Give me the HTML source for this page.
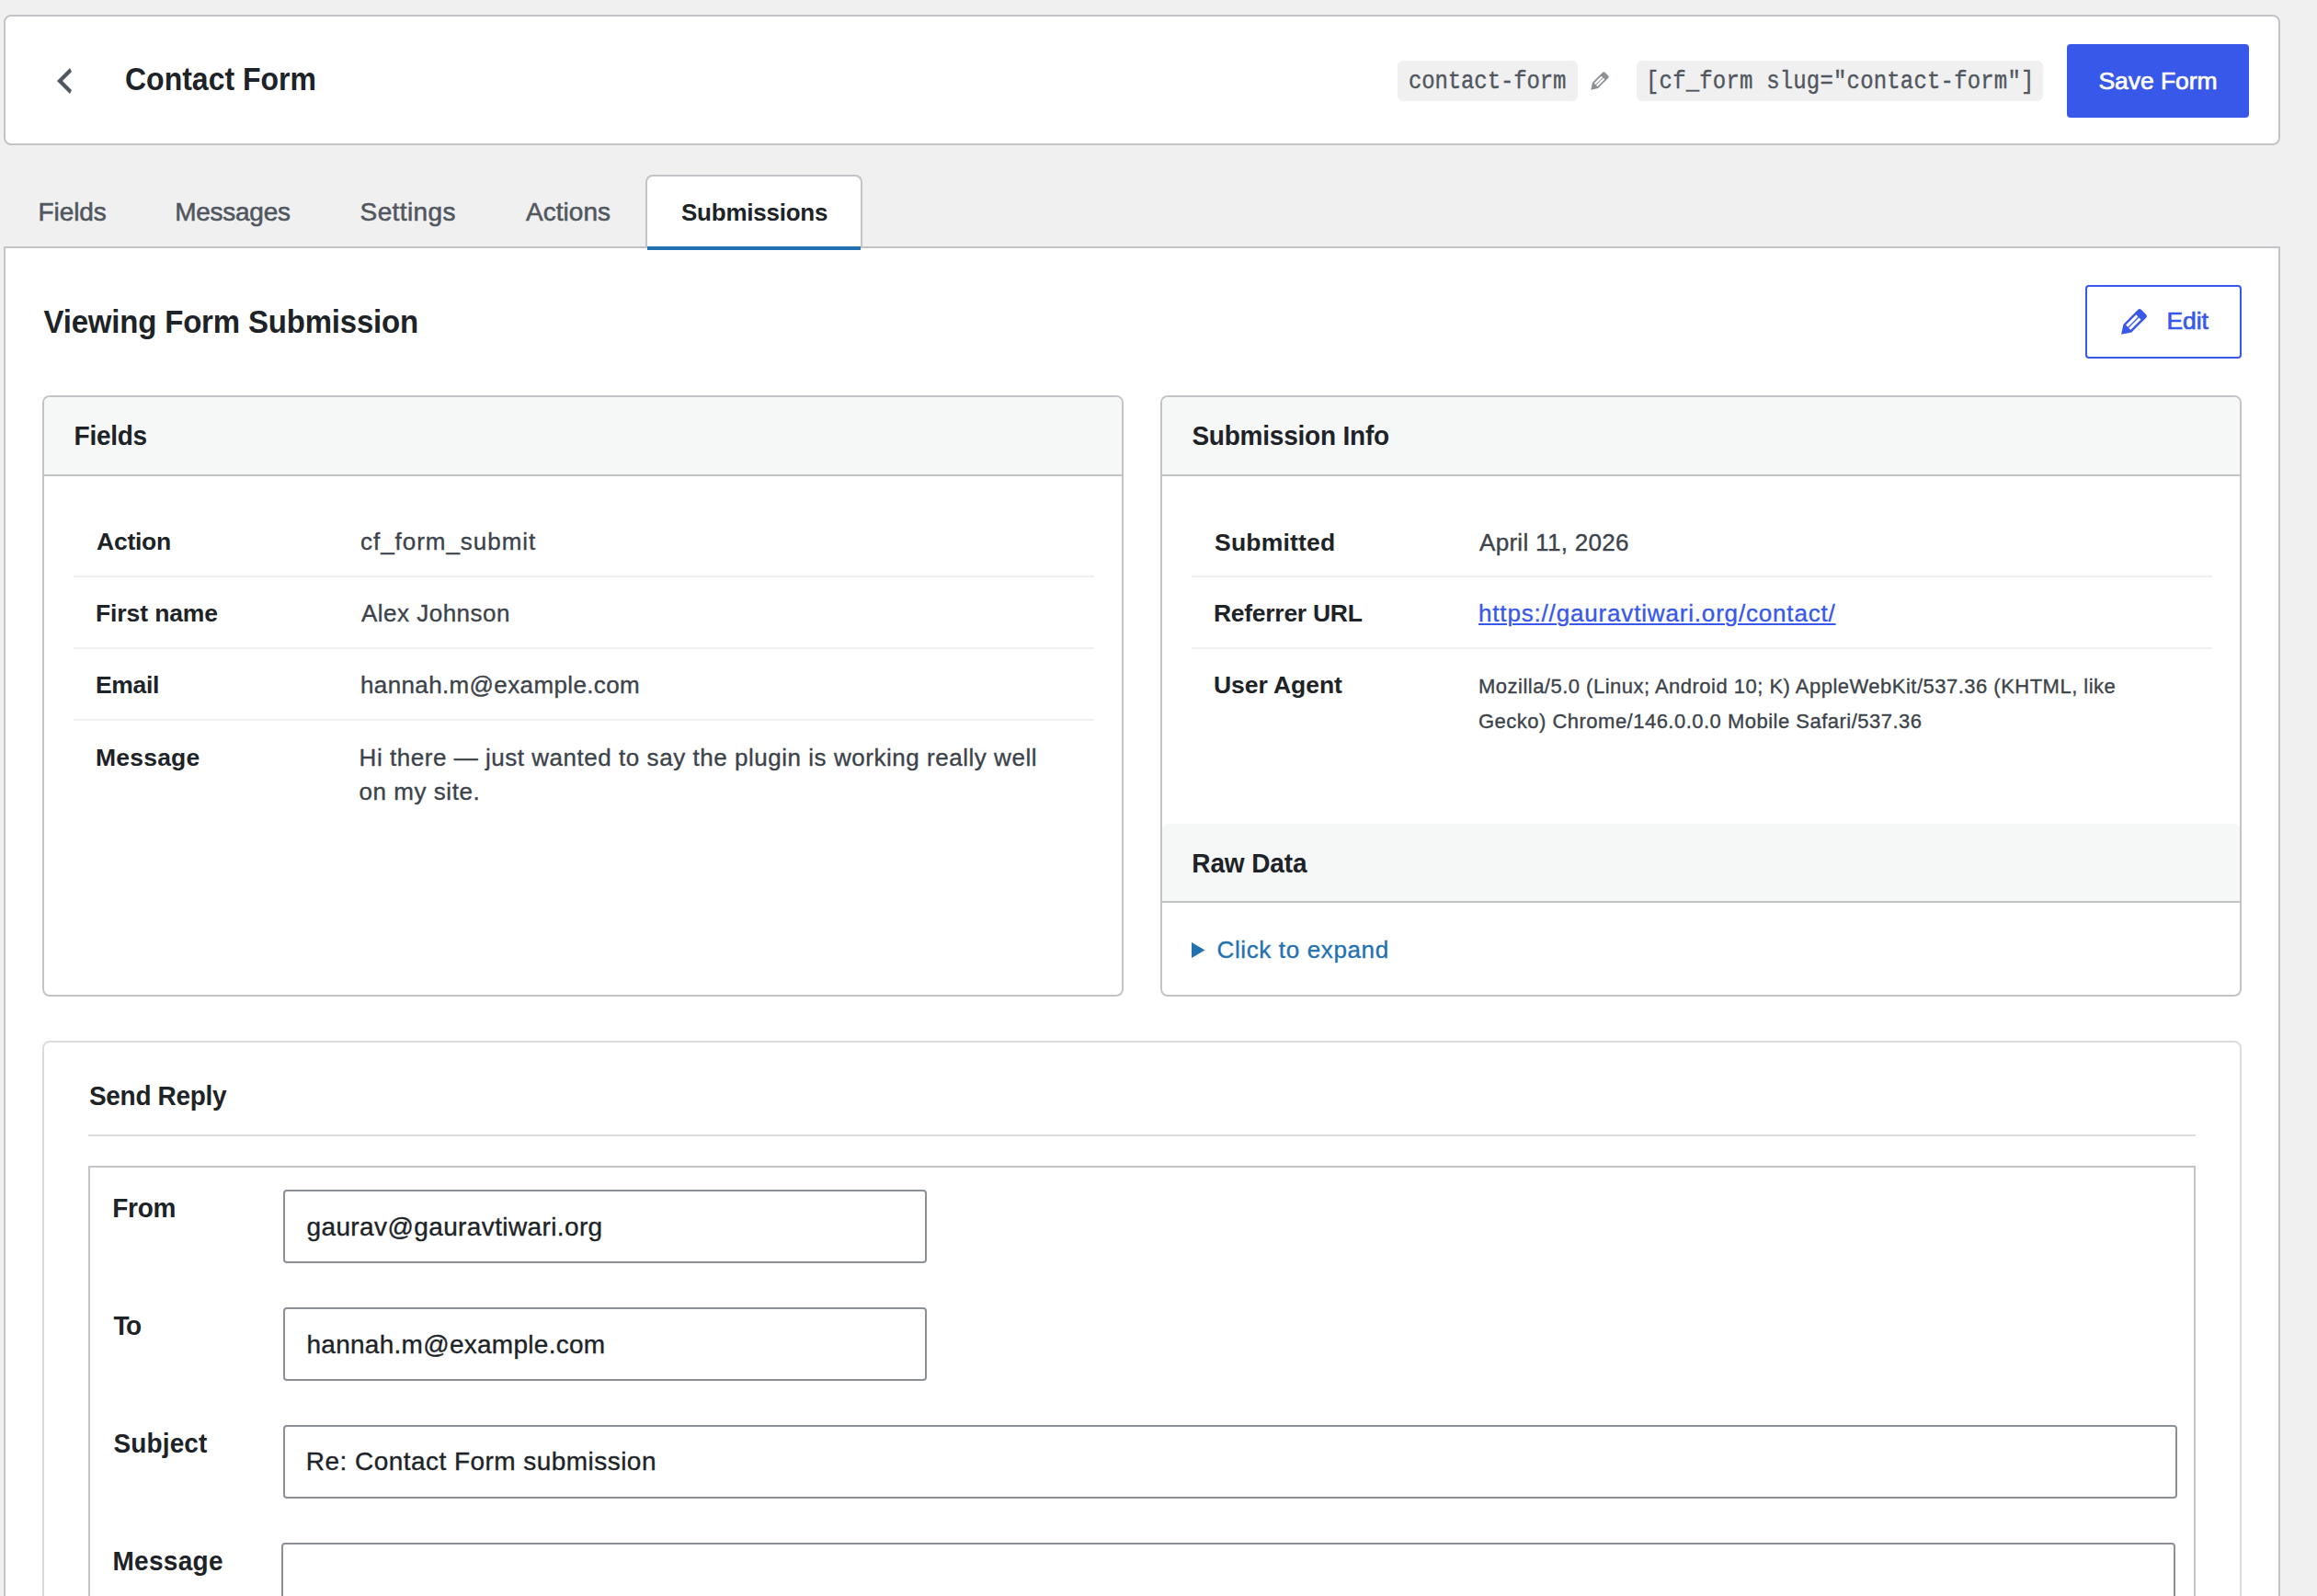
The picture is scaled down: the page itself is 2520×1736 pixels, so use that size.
<!DOCTYPE html>
<html><head><meta charset="utf-8">
<style>
html,body{margin:0;padding:0;}
body{width:2520px;height:1736px;overflow:hidden;background:#f0f0f1;position:relative;font-family:"Liberation Sans",sans-serif;}
.b{position:absolute;box-sizing:border-box;}
.t{position:absolute;white-space:nowrap;font-family:"Liberation Sans",sans-serif;}
svg{position:absolute;overflow:visible;}
</style></head><body>
<!-- header card -->
<div class="b" style="left:4px;top:16px;width:2476px;height:142px;background:#fff;border:2px solid #c3c4c7;border-radius:8px;"></div>
<svg style="left:50px;top:68px" width="40" height="40" viewBox="0 0 20 20"><path fill="#50575e" d="M14 5l-5 5 5 5-1 2-7-7 7-7z"/></svg>
<div class="b" style="left:1520px;top:66px;width:196px;height:44px;background:#f0f0f1;border-radius:6px;"></div>
<div class="b" style="left:1780px;top:66px;width:442px;height:44px;background:#f0f0f1;border-radius:6px;"></div>
<svg style="left:1725.7px;top:73.7px" width="28" height="28" viewBox="0 0 20 20"><path fill="#8c8f94" d="M13.89 3.39l2.71 2.72c.46.46.42 1.24.03 1.64l-8.01 8.02-5.560 1.16 1.16-5.58s7.6-7.63 7.99-8.03c.39-.39 1.22-.39 1.68.07zm-2.73 2.79l-5.59 5.61 1.11 1.110 5.54-5.65zm-2.97 8.23l5.58-5.6-1.07-1.08-5.59 5.6z"/></svg>
<div class="b" style="left:2248px;top:48px;width:198px;height:80px;background:#3858e9;border-radius:4px;"></div>
<!-- tabs + panel -->
<div class="b" style="left:4px;top:268px;width:2476px;height:1500px;background:#fff;border:2px solid #c3c4c7;"></div>
<div class="b" style="left:702px;top:190px;width:236px;height:80px;background:#fff;border:2px solid #c3c4c7;border-bottom:none;border-radius:8px 8px 0 0;"></div>
<div class="b" style="left:704px;top:268px;width:232px;height:4px;background:#2271b1;"></div>
<!-- edit button -->
<div class="b" style="left:2268px;top:310px;width:170px;height:80px;border:2px solid #3858e9;border-radius:4px;"></div>
<svg style="left:2300.8px;top:330px" width="40" height="40" viewBox="0 0 20 20"><path fill="#3858e9" d="M13.89 3.39l2.71 2.72c.46.46.42 1.24.03 1.64l-8.01 8.02-5.560 1.16 1.16-5.58s7.6-7.63 7.99-8.03c.39-.39 1.22-.39 1.68.07zm-2.73 2.79l-5.59 5.61 1.11 1.110 5.54-5.65zm-2.97 8.23l5.58-5.6-1.07-1.08-5.59 5.6z"/></svg>
<!-- fields card -->
<div class="b" style="left:46px;top:430px;width:1176px;height:654px;background:#fff;border:2px solid #c3c4c7;border-radius:8px;overflow:hidden;">
  <div class="b" style="left:0;top:0;width:1172px;height:86px;background:#f6f7f7;border-bottom:2px solid #c3c4c7;"></div>
</div>
<div class="b" style="left:80px;top:626px;width:1110px;height:2px;background:#f0f0f1;"></div>
<div class="b" style="left:80px;top:704px;width:1110px;height:2px;background:#f0f0f1;"></div>
<div class="b" style="left:80px;top:782px;width:1110px;height:2px;background:#f0f0f1;"></div>
<!-- submission info card -->
<div class="b" style="left:1262px;top:430px;width:1176px;height:654px;background:#fff;border:2px solid #c3c4c7;border-radius:8px;overflow:hidden;">
  <div class="b" style="left:0;top:0;width:1172px;height:86px;background:#f6f7f7;border-bottom:2px solid #c3c4c7;"></div>
  <div class="b" style="left:0;top:464px;width:1172px;height:86px;background:#f6f7f7;border-bottom:2px solid #c3c4c7;border-radius:6px 6px 0 0;"></div>
</div>
<div class="b" style="left:1296px;top:626px;width:1110px;height:2px;background:#f0f0f1;"></div>
<div class="b" style="left:1296px;top:704px;width:1110px;height:2px;background:#f0f0f1;"></div>
<svg style="left:0;top:0" width="1" height="1"><polygon points="1296,1025 1310.5,1033.5 1296,1042" fill="#2271b1"/></svg>
<!-- send reply -->
<div class="b" style="left:46px;top:1132px;width:2392px;height:700px;background:#fff;border:2px solid #dcdcde;border-radius:8px;"></div>
<div class="b" style="left:96px;top:1234px;width:2292px;height:2px;background:#dcdcde;"></div>
<div class="b" style="left:96px;top:1268px;width:2292px;height:600px;border:2px solid #c3c4c7;"></div>
<div class="b" style="left:308px;top:1294px;width:700px;height:80px;background:#fff;border:2px solid #8c8f94;border-radius:4px;"></div>
<div class="b" style="left:308px;top:1422px;width:700px;height:80px;background:#fff;border:2px solid #8c8f94;border-radius:4px;"></div>
<div class="b" style="left:308px;top:1550px;width:2060px;height:80px;background:#fff;border:2px solid #8c8f94;border-radius:4px;"></div>
<div class="b" style="left:306px;top:1678px;width:2060px;height:200px;background:#fff;border:2px solid #8c8f94;border-radius:4px;"></div>
<div class="t" style='left:136.00px;top:71.20px;font-size:32px;line-height:32px;font-weight:700;color:#1d2327;letter-spacing:-0.004px;transform:scaleY(1.08);transform-origin:0 27.00px;'>Contact Form</div>
<div class="t" style='left:1532.00px;top:78.00px;font-size:24px;line-height:24px;font-weight:400;color:#50575e;letter-spacing:-0.130px;font-family:"Liberation Mono", monospace;-webkit-text-stroke:0.35px currentColor;transform:scaleY(1.14);transform-origin:0 18.00px;'>contact-form</div>
<div class="t" style='left:1790.00px;top:78.00px;font-size:24px;line-height:24px;font-weight:400;color:#50575e;letter-spacing:0.169px;font-family:"Liberation Mono", monospace;-webkit-text-stroke:0.35px currentColor;transform:scaleY(1.14);transform-origin:0 18.00px;'>[cf_form slug="contact-form"]</div>
<div class="t" style='left:2282.50px;top:74.50px;font-size:26.5px;line-height:26.5px;font-weight:400;color:#ffffff;letter-spacing:-0.064px;-webkit-text-stroke:0.7px currentColor;'>Save Form</div>
<div class="t" style='left:41.60px;top:217.00px;font-size:28px;line-height:28px;font-weight:400;color:#50575e;letter-spacing:-0.098px;-webkit-text-stroke:0.55px currentColor;'>Fields</div>
<div class="t" style='left:190.20px;top:217.00px;font-size:28px;line-height:28px;font-weight:400;color:#50575e;letter-spacing:-0.259px;-webkit-text-stroke:0.55px currentColor;'>Messages</div>
<div class="t" style='left:391.60px;top:217.00px;font-size:28px;line-height:28px;font-weight:400;color:#50575e;letter-spacing:0.375px;-webkit-text-stroke:0.55px currentColor;'>Settings</div>
<div class="t" style='left:572.00px;top:217.00px;font-size:28px;line-height:28px;font-weight:400;color:#50575e;letter-spacing:0.030px;-webkit-text-stroke:0.55px currentColor;'>Actions</div>
<div class="t" style='left:741.00px;top:218.00px;font-size:26px;line-height:26px;font-weight:700;color:#1d2327;letter-spacing:-0.235px;'>Submissions</div>
<div class="t" style='left:47.50px;top:333.90px;font-size:33px;line-height:33px;font-weight:700;color:#1d2327;letter-spacing:-0.195px;transform:scaleY(1.06);transform-origin:0 28.00px;'>Viewing Form Submission</div>
<div class="t" style='left:2356.50px;top:335.80px;font-size:26.5px;line-height:26.5px;font-weight:400;color:#3858e9;letter-spacing:-0.100px;-webkit-text-stroke:0.7px currentColor;'>Edit</div>
<div class="t" style='left:80.60px;top:461.00px;font-size:28px;line-height:28px;font-weight:700;color:#1d2327;letter-spacing:-0.288px;transform:scaleY(1.05);transform-origin:0 23.00px;'>Fields</div>
<div class="t" style='left:105.00px;top:576.00px;font-size:26.5px;line-height:26.5px;font-weight:700;color:#1d2327;letter-spacing:-0.250px;'>Action</div>
<div class="t" style='left:104.00px;top:654.00px;font-size:26.5px;line-height:26.5px;font-weight:700;color:#1d2327;letter-spacing:-0.108px;'>First name</div>
<div class="t" style='left:104.00px;top:732.00px;font-size:26.5px;line-height:26.5px;font-weight:700;color:#1d2327;letter-spacing:-0.335px;'>Email</div>
<div class="t" style='left:104.00px;top:811.00px;font-size:26.5px;line-height:26.5px;font-weight:700;color:#1d2327;letter-spacing:0.214px;'>Message</div>
<div class="t" style='left:392.00px;top:576.00px;font-size:26px;line-height:26px;font-weight:400;color:#3c434a;letter-spacing:0.962px;-webkit-text-stroke:0.35px currentColor;'>cf_form_submit</div>
<div class="t" style='left:393.00px;top:654.00px;font-size:26px;line-height:26px;font-weight:400;color:#3c434a;letter-spacing:0.487px;-webkit-text-stroke:0.35px currentColor;'>Alex Johnson</div>
<div class="t" style='left:392.00px;top:732.00px;font-size:26px;line-height:26px;font-weight:400;color:#3c434a;letter-spacing:0.369px;-webkit-text-stroke:0.35px currentColor;'>hannah.m@example.com</div>
<div class="t" style='left:390.60px;top:806.00px;font-size:26px;line-height:37px;font-weight:400;color:#3c434a;letter-spacing:0.534px;-webkit-text-stroke:0.35px currentColor;'>Hi there — just wanted to say the plugin is working really well<br>on my site.</div>
<div class="t" style='left:1296.40px;top:461.30px;font-size:28px;line-height:28px;font-weight:700;color:#1d2327;letter-spacing:-0.220px;transform:scaleY(1.05);transform-origin:0 23.00px;'>Submission Info</div>
<div class="t" style='left:1321.00px;top:576.50px;font-size:26.5px;line-height:26.5px;font-weight:700;color:#1d2327;letter-spacing:0.205px;'>Submitted</div>
<div class="t" style='left:1320.00px;top:654.40px;font-size:26.5px;line-height:26.5px;font-weight:700;color:#1d2327;letter-spacing:-0.277px;'>Referrer URL</div>
<div class="t" style='left:1320.00px;top:732.20px;font-size:26.5px;line-height:26.5px;font-weight:700;color:#1d2327;letter-spacing:-0.060px;'>User Agent</div>
<div class="t" style='left:1609.00px;top:576.50px;font-size:26px;line-height:26px;font-weight:400;color:#3c434a;letter-spacing:0.304px;-webkit-text-stroke:0.35px currentColor;'>April 11, 2026</div>
<div class="t" style='left:1608.00px;top:654.40px;font-size:26px;line-height:26px;font-weight:400;color:#3858e9;letter-spacing:0.829px;-webkit-text-stroke:0.35px currentColor;text-decoration:underline;text-decoration-thickness:2px;text-underline-offset:1.6px;'>https://gauravtiwari.org/contact/</div>
<div class="t" style='left:1608.00px;top:728.20px;font-size:22px;line-height:38px;font-weight:400;color:#3c434a;letter-spacing:0.487px;-webkit-text-stroke:0.35px currentColor;'>Mozilla/5.0 (Linux; Android 10; K) AppleWebKit/537.36 (KHTML, like<br>Gecko) Chrome/146.0.0.0 Mobile Safari/537.36</div>
<div class="t" style='left:1296.30px;top:925.50px;font-size:28px;line-height:28px;font-weight:700;color:#1d2327;letter-spacing:-0.110px;transform:scaleY(1.05);transform-origin:0 23.00px;'>Raw Data</div>
<div class="t" style='left:1323.50px;top:1020.20px;font-size:26px;line-height:26px;font-weight:400;color:#2271b1;letter-spacing:0.636px;-webkit-text-stroke:0.35px currentColor;'>Click to expand</div>
<div class="t" style='left:97.00px;top:1179.00px;font-size:28px;line-height:28px;font-weight:700;color:#1d2327;letter-spacing:-0.323px;transform:scaleY(1.05);transform-origin:0 23.00px;'>Send Reply</div>
<div class="t" style='left:122.30px;top:1301.40px;font-size:28px;line-height:28px;font-weight:700;color:#1d2327;letter-spacing:-0.301px;transform:scaleY(1.05);transform-origin:0 23.00px;'>From</div>
<div class="t" style='left:123.50px;top:1428.70px;font-size:28px;line-height:28px;font-weight:700;color:#1d2327;letter-spacing:-1.525px;transform:scaleY(1.05);transform-origin:0 23.00px;'>To</div>
<div class="t" style='left:123.50px;top:1557.00px;font-size:28px;line-height:28px;font-weight:700;color:#1d2327;letter-spacing:0.116px;transform:scaleY(1.05);transform-origin:0 23.00px;'>Subject</div>
<div class="t" style='left:122.50px;top:1685.00px;font-size:28px;line-height:28px;font-weight:700;color:#1d2327;letter-spacing:0.297px;transform:scaleY(1.05);transform-origin:0 23.00px;'>Message</div>
<div class="t" style='left:333.50px;top:1320.90px;font-size:28px;line-height:28px;font-weight:400;color:#1d2327;letter-spacing:0.383px;-webkit-text-stroke:0.35px currentColor;'>gaurav@gauravtiwari.org</div>
<div class="t" style='left:333.50px;top:1448.60px;font-size:28px;line-height:28px;font-weight:400;color:#1d2327;letter-spacing:0.271px;-webkit-text-stroke:0.35px currentColor;'>hannah.m@example.com</div>
<div class="t" style='left:332.80px;top:1576.40px;font-size:28px;line-height:28px;font-weight:400;color:#1d2327;letter-spacing:0.457px;-webkit-text-stroke:0.35px currentColor;'>Re: Contact Form submission</div>
</body></html>
